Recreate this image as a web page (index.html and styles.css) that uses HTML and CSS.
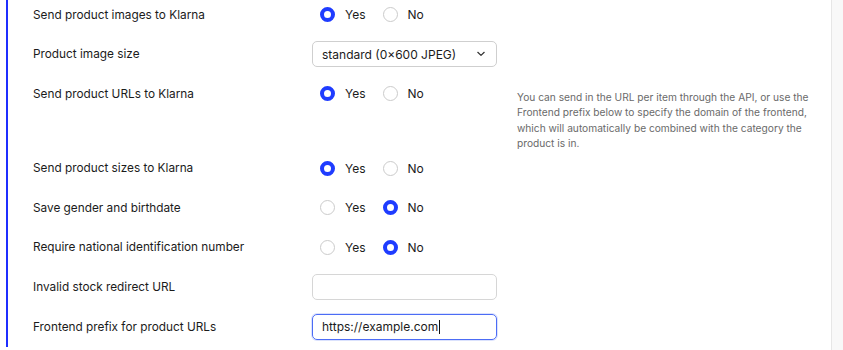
FILE: index.html
```html
<!DOCTYPE html>
<html lang="en">
<head>
<meta charset="utf-8">
<title>Klarna settings</title>
<link rel="stylesheet" href="styles.css">
</head>
<body>
<div class="panel">
  <section class="group">
    <div class="row">
      <div class="label">Send product images to Klarna</div>
      <div class="control">
        <label class="radio"><span class="dot on"></span>Yes</label>
        <label class="radio"><span class="dot"></span>No</label>
      </div>
    </div>
    <div class="row">
      <div class="label">Product image size</div>
      <div class="control">
        <div class="select">
          <span>standard (0×600 JPEG)</span>
          <svg class="chev" width="10" height="6" viewBox="0 0 10 6"><path d="M1.8 1.3 L5 4.4 L8.2 1.3" fill="none" stroke="#333" stroke-width="1.2" stroke-linecap="round" stroke-linejoin="round"/></svg>
        </div>
      </div>
    </div>
    <div class="row row-help">
      <div class="label">Send product URLs to Klarna</div>
      <div class="control">
        <label class="radio"><span class="dot on"></span>Yes</label>
        <label class="radio"><span class="dot"></span>No</label>
      </div>
      <p class="help">You can send in the URL per item through the API, or use the Frontend prefix below to specify the domain of the frontend, which will automatically be combined with the category the product is in.</p>
    </div>
    <div class="row">
      <div class="label">Send product sizes to Klarna</div>
      <div class="control">
        <label class="radio"><span class="dot on"></span>Yes</label>
        <label class="radio"><span class="dot"></span>No</label>
      </div>
    </div>
    <div class="row">
      <div class="label">Save gender and birthdate</div>
      <div class="control">
        <label class="radio"><span class="dot"></span>Yes</label>
        <label class="radio"><span class="dot on"></span>No</label>
      </div>
    </div>
    <div class="row">
      <div class="label">Require national identification number</div>
      <div class="control">
        <label class="radio"><span class="dot"></span>Yes</label>
        <label class="radio"><span class="dot on"></span>No</label>
      </div>
    </div>
    <div class="row">
      <div class="label">Invalid stock redirect URL</div>
      <div class="control">
        <div class="input"></div>
      </div>
    </div>
    <div class="row">
      <div class="label">Frontend prefix for product URLs</div>
      <div class="control">
        <div class="input focus">https://example.com<span class="caret"></span></div>
      </div>
    </div>
  </section>
</div>
</body>
</html>
```

FILE: styles.css
```css
html, body {
  margin: 0;
  padding: 0;
}
body {
  background: #f8f8f8;
  font-family: Inter, "Noto Sans", sans-serif;
  color: #1b1b1b;
  width: 843px;
  height: 350px;
  overflow: hidden;
}
.panel {
  width: 831px;
  height: 350px;
  background: #fff;
  border-right: 1px solid #e6e6e6;
  overflow: hidden;
}
.group {
  margin-left: 6px;
  border-left: 2px solid #1f2eff;
  padding-left: 25px;
  margin-top: -5.5px;
}
.row {
  display: flex;
  align-items: flex-start;
  padding: 7px 0 6.7px;
  height: 26px;
}
.row-help {
  height: 60.5px;
}
.label {
  width: 279px;
  flex: none;
  font-size: 11.8px;
  line-height: 26px;
}
.control {
  width: 185px;
  flex: none;
  display: flex;
  align-items: center;
  height: 26px;
}
.radio {
  display: flex;
  align-items: center;
  font-size: 12px;
  margin-left: 8px;
  margin-right: 9px;
}
.radio + .radio {
  margin-left: 8px;
}
.dot {
  box-sizing: border-box;
  width: 15px;
  height: 15px;
  border-radius: 50%;
  border: 1px solid #cbcbcb;
  background: #fff;
  margin-right: 10px;
}
.dot.on {
  border: 4.5px solid #1f3cff;
}
.select {
  box-sizing: border-box;
  width: 185px;
  height: 26px;
  border: 1px solid #cfcfcf;
  border-radius: 5px;
  display: flex;
  align-items: center;
  justify-content: space-between;
  padding: 0 10px 0 9px;
  font-size: 12px;
}
.chev {
  display: block;
}
.input {
  box-sizing: border-box;
  width: 185px;
  height: 26px;
  border: 1px solid #d6d6d6;
  border-radius: 5px;
  font-size: 12px;
  padding: 0 9px;
  display: flex;
  align-items: center;
}
.input.focus {
  border-color: #4c6cf5;
  box-shadow: 0 0 0 1px rgba(76, 108, 245, 0.2);
}
.caret {
  display: inline-block;
  width: 1px;
  height: 14px;
  background: #111;
  margin-left: 1px;
}
.help {
  margin: 9px 0 0 20px;
  width: 292px;
  font-size: 10.2px;
  line-height: 15.5px;
  color: #6a6a6a;
}
```
